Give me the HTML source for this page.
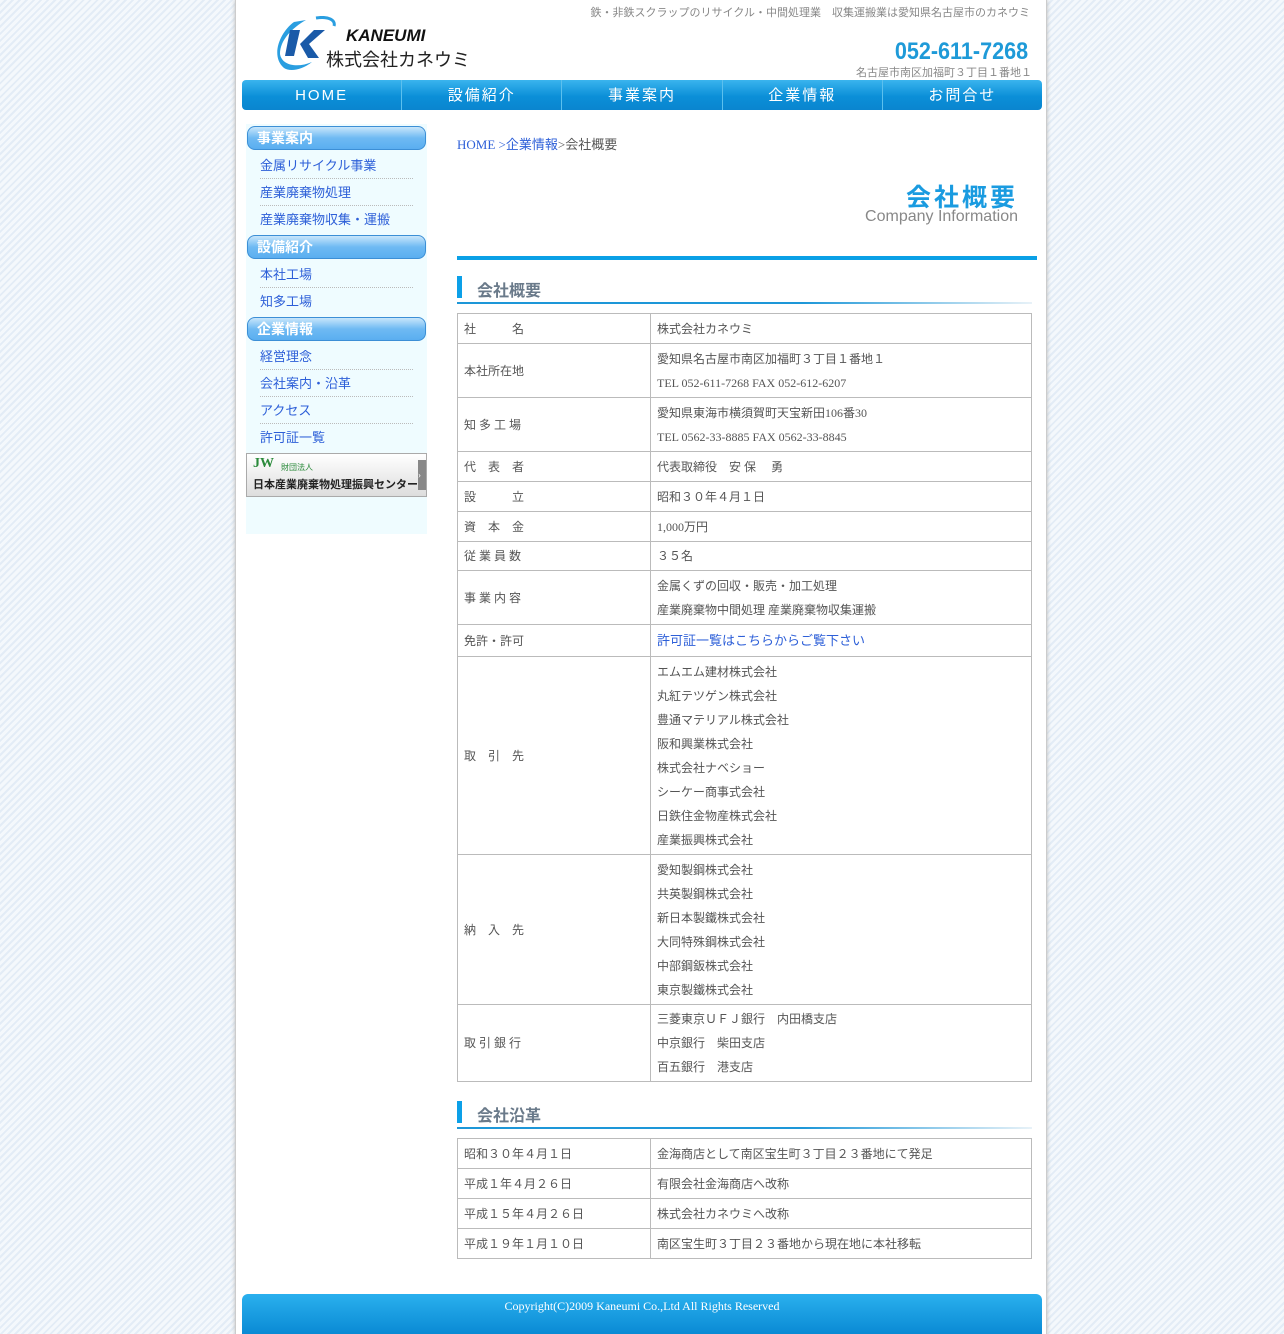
<!DOCTYPE html>
<html><head><meta charset="utf-8"><style>
*{margin:0;padding:0;box-sizing:border-box}
body{width:1284px;height:1334px;overflow:hidden;background:#eef3fa repeating-linear-gradient(135deg,#f4f8fc 0 3px,#e3ecf6 3px 5px);font-family:"Liberation Serif","Noto Sans CJK JP",sans-serif;color:#555;font-size:12px;position:relative}
#page{position:absolute;left:235px;top:0;width:812px;height:1334px;background:#fff;border-left:1px solid #ccc;border-right:1px solid #ccc;box-shadow:0 0 4px #bbb}
.abs{position:absolute}
#nav{left:6px;top:80px;width:800px;height:30px;border-radius:4px;background:linear-gradient(#3ab4ee,#0b8fd8 55%,#0a85cf);display:flex}
#nav div{flex:1;color:#fff;text-align:center;line-height:32px;font-family:"Liberation Sans","Noto Sans CJK JP",sans-serif;font-size:15px;letter-spacing:2px;border-right:1px solid #5cc0ee}
#nav div:last-child{border:none}
#side{left:10px;top:124px;width:181px;height:410px;background:#effcff}
.sh{height:24px;margin:2px 0 2px 1px;width:179px;border-radius:8px;border:1px solid #3c8fd6;background:linear-gradient(#c8e6fb,#6fbaf3 50%,#5aaef0);color:#fff;font-weight:bold;font-family:"Liberation Sans","Noto Sans CJK JP",sans-serif;font-size:14px;line-height:22px;padding-left:9px}
.si{margin:0 14px 0 14px;height:27px;line-height:27px;border-bottom:1px dotted #bbb;color:#2d5fd8;font-family:"Liberation Sans","Noto Sans CJK JP",sans-serif;font-size:13px}
.si.l{border:none}
table{border-collapse:collapse;width:575px;position:absolute;left:221px}
td{border:1px solid #bbb;padding:0 6px;font-size:12px;vertical-align:middle;line-height:24px}
td:first-child{width:193px}
.h2{left:221px;width:575px;height:26px;font-family:"Liberation Sans","Noto Sans CJK JP",sans-serif;font-weight:bold;font-size:16px;color:#6a7a8a;padding-left:20px;line-height:32px}
.h2:before{content:"";position:absolute;left:0;top:0;width:5px;height:22px;background:#0ca0e8}
.h2:after{content:"";position:absolute;left:0;bottom:-2px;width:100%;height:2px;background:linear-gradient(90deg,#1d97d8,#1d97d8 60%,#e8f2f8)}
a{color:#2d5fd8;text-decoration:none}
</style></head><body>
<div id="page">
<div class="abs" style="right:16px;top:4px;font-family:'Liberation Sans','Noto Sans CJK JP',sans-serif;font-size:11px;color:#888">鉄・非鉄スクラップのリサイクル・中間処理業　収集運搬業は愛知県名古屋市のカネウミ</div>
<svg class="abs" style="left:36px;top:16px" width="70" height="56"><path d="M22 6 C8 16 -2 40 12 52 C18 56 30 54 40 46 C26 52 10 50 8 38 C8 24 20 12 34 4Z" fill="#2a9ee0"/><path d="M18 14h10l-6 26h-9z M28 28l14-14h11l-16 14 10 14h-11z" fill="#1a5aa8"/><path d="M44 2 C56 0 64 4 62 10" stroke="#2a9ee0" stroke-width="3" fill="none"/></svg>
<div class="abs" style="left:110px;top:26px;font-family:'Liberation Sans',sans-serif;font-weight:bold;font-style:italic;font-size:17px;color:#111">KANEUMI</div>
<div class="abs" style="left:90px;top:46px;font-family:'Liberation Sans','Noto Sans CJK JP',sans-serif;font-size:18px;color:#222">株式会社カネウミ</div>
<div class="abs" style="right:18px;top:38px;font-family:'Liberation Sans',sans-serif;font-weight:bold;font-size:24px;color:#1e9ad8;transform:scaleX(0.9);transform-origin:right">052-611-7268</div>
<div class="abs" style="right:14px;top:64px;font-family:'Liberation Sans','Noto Sans CJK JP',sans-serif;font-size:11px;color:#888">名古屋市南区加福町３丁目１番地１</div>
<div id="nav" class="abs"><div>HOME</div><div>設備紹介</div><div>事業案内</div><div>企業情報</div><div>お問合せ</div></div>
<div id="side" class="abs">
<div class="sh">事業案内</div><div class="si">金属リサイクル事業</div><div class="si">産業廃棄物処理</div><div class="si l">産業廃棄物収集・運搬</div>
<div class="sh">設備紹介</div><div class="si">本社工場</div><div class="si l">知多工場</div>
<div class="sh">企業情報</div><div class="si">経営理念</div><div class="si">会社案内・沿革</div><div class="si">アクセス</div><div class="si l">許可証一覧</div>
<div style="height:44px;border:1px solid #aaa;background:linear-gradient(#fff,#ddd);position:relative;margin-top:2px"><span style="position:absolute;left:6px;top:2px;color:#2a8a3a;font-family:'Liberation Serif';font-weight:bold;font-size:14px">JW</span><span style="position:absolute;left:34px;top:8px;font-size:8px;color:#2a8a3a">財団法人</span><div style="position:absolute;left:6px;top:22px;font-size:11px;font-weight:bold;color:#222;font-family:'Liberation Sans','Noto Sans CJK JP',sans-serif">日本産業廃棄物処理振興センター</div><div style="position:absolute;right:0;top:6px;width:8px;height:30px;background:#888;color:#fff;font-size:9px;line-height:30px">›</div></div>
</div>
<div class="abs" style="left:221px;top:134px;font-size:13px"><a>HOME</a> <a>&gt;企業情報</a>&gt;会社概要</div>
<div class="abs" style="right:28px;top:178px;font-family:'Liberation Sans','Noto Sans CJK JP',sans-serif;font-weight:bold;font-size:25px;color:#1a9be0;letter-spacing:3px">会社概要</div>
<div class="abs" style="right:28px;top:208px;font-family:'Liberation Sans',sans-serif;font-size:16px;color:#888">Company Information</div>
<div class="abs" style="left:221px;top:256px;width:580px;height:4px;background:#0aa0e6"></div>
<div class="abs h2" style="top:276px">会社概要</div>
<table style="top:313px">
<tr style="height:30px"><td>社　　　名</td><td>株式会社カネウミ</td></tr>
<tr style="height:54px"><td>本社所在地</td><td>愛知県名古屋市南区加福町３丁目１番地１<br>TEL 052-611-7268 FAX 052-612-6207</td></tr>
<tr style="height:54px"><td>知 多 工 場</td><td>愛知県東海市横須賀町天宝新田106番30<br>TEL 0562-33-8885 FAX 0562-33-8845</td></tr>
<tr style="height:30px"><td>代　表　者</td><td>代表取締役　安 保　 勇</td></tr>
<tr style="height:30px"><td>設　　　立</td><td>昭和３０年４月１日</td></tr>
<tr style="height:30px"><td>資　本　金</td><td>1,000万円</td></tr>
<tr style="height:29px"><td>従 業 員 数</td><td>３５名</td></tr>
<tr style="height:54px"><td>事 業 内 容</td><td>金属くずの回収・販売・加工処理<br>産業廃棄物中間処理 産業廃棄物収集運搬</td></tr>
<tr style="height:32px"><td>免許・許可</td><td><a style="font-size:13px">許可証一覧はこちらからご覧下さい</a></td></tr>
<tr style="height:198px"><td>取　引　先</td><td>エムエム建材株式会社<br>丸紅テツゲン株式会社<br>豊通マテリアル株式会社<br>阪和興業株式会社<br>株式会社ナベショー<br>シーケー商事式会社<br>日鉄住金物産株式会社<br>産業振興株式会社</td></tr>
<tr style="height:150px"><td>納　入　先</td><td>愛知製鋼株式会社<br>共英製鋼株式会社<br>新日本製鐵株式会社<br>大同特殊鋼株式会社<br>中部鋼鈑株式会社<br>東京製鐵株式会社</td></tr>
<tr style="height:77px"><td>取 引 銀 行</td><td>三菱東京ＵＦＪ銀行　内田橋支店<br>中京銀行　柴田支店<br>百五銀行　港支店</td></tr>
</table>
<div class="abs h2" style="top:1101px">会社沿革</div>
<table style="top:1138px">
<tr style="height:30px"><td>昭和３０年４月１日</td><td>金海商店として南区宝生町３丁目２３番地にて発足</td></tr>
<tr style="height:30px"><td>平成１年４月２６日</td><td>有限会社金海商店へ改称</td></tr>
<tr style="height:30px"><td>平成１５年４月２６日</td><td>株式会社カネウミへ改称</td></tr>
<tr style="height:30px"><td>平成１９年１月１０日</td><td>南区宝生町３丁目２３番地から現在地に本社移転</td></tr>
</table>
<div class="abs" style="left:6px;top:1294px;width:800px;height:40px;border-radius:6px 6px 0 0;background:linear-gradient(#2ab0ee,#0a8ad4);color:#fff;text-align:center;font-size:12px;padding-top:5px">Copyright(C)2009 Kaneumi Co.,Ltd All Rights Reserved</div>
</div>
</body></html>
